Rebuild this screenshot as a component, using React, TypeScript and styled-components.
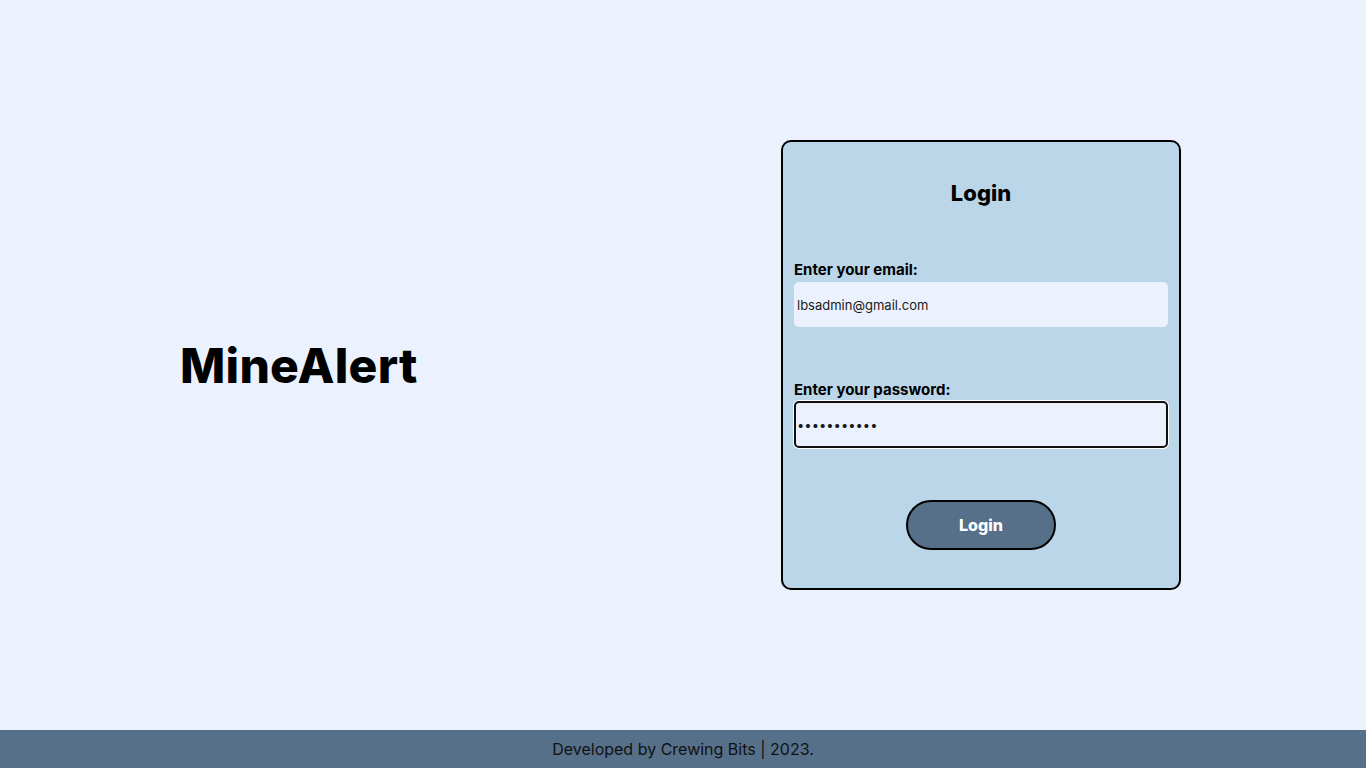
import React from "react";
import styled, { createGlobalStyle } from "styled-components";

const GlobalStyle = createGlobalStyle`
  html, body {
    margin: 0;
    padding: 0;
    background: #EBF2FE;
    font-family: Inter, "Noto Sans", sans-serif;
  }
`

const Page = styled.div`
  display: flex;
  flex-direction: column;
  height: 768px;
`

const Main = styled.main`
  flex: 1;
  display: flex;
  justify-content: space-between;
  align-items: center;
  padding: 0 185px 0 180px;
`

const Brand = styled.h1`
  margin: 0;
  font-size: 48px;
  font-weight: 800;
  letter-spacing: 0.25px;
  color: #000;
`

const Card = styled.div`
  width: 400px;
  height: 450px;
  box-sizing: border-box;
  background: #BAD6E8;
  border: 2px solid #000;
  border-radius: 10px;
  padding: 0 11px;
  display: flex;
  flex-direction: column;
`

const Title = styled.h2`
  margin: 38px 0 0;
  text-align: center;
  font-size: 22px;
  line-height: 27px;
  font-weight: 800;
`

const Field = styled.div`
  display: flex;
  flex-direction: column;
  margin-top: 54px;
`

const Label = styled.label<{ $focused?: boolean }>`
  font-size: 15px;
  line-height: 18px;
  font-weight: 700;
  margin-bottom: ${(p) => (p.$focused ? "2px" : "3px")};
`

const Input = styled.input<{ $focused?: boolean }>`
  height: ${(p) => (p.$focused ? "47px" : "45px")};
  box-sizing: border-box;
  border: ${(p) => (p.$focused ? "2px solid #101010" : "none")};
  box-shadow: ${(p) => (p.$focused ? "0 0 0 1px #fff" : "none")};
  border-radius: 5px;
  background: #EBF2FE;
  padding: 0 ${(p) => (p.$focused ? "1px" : "3px")};
  font-family: Inter, "Noto Sans", sans-serif;
  font-size: 13px;
  color: #1a1a1a;
  outline: none;
`

const ButtonRow = styled.div`
  display: flex;
  justify-content: center;
  margin-top: 52px;
`

const Button = styled.button`
  width: 150px;
  height: 50px;
  border-radius: 25px;
  border: 2px solid #000;
  background: #56708A;
  color: #fff;
  font-family: Inter, "Noto Sans", sans-serif;
  font-size: 16px;
  font-weight: 800;
  cursor: pointer;
`

const Footer = styled.footer`
  height: 38px;
  background: #56708A;
  display: flex;
  align-items: center;
  justify-content: center;
  font-size: 16px;
  color: #111;
`

const App: React.FC = () => {
  return (
    <Page>
      <GlobalStyle />
      <Main>
        <Brand>MineAlert</Brand>
        <Card>
          <Title>Login</Title>
          <Field>
            <Label>Enter your email:</Label>
            <Input type="email" defaultValue="lbsadmin@gmail.com" />
          </Field>
          <Field>
            <Label $focused>Enter your password:</Label>
            <Input $focused type="password" defaultValue="lbsadmin123" />
          </Field>
          <ButtonRow>
            <Button>Login</Button>
          </ButtonRow>
        </Card>
      </Main>
      <Footer>Developed by Crewing Bits | 2023.</Footer>
    </Page>
  );
};

export default App;
